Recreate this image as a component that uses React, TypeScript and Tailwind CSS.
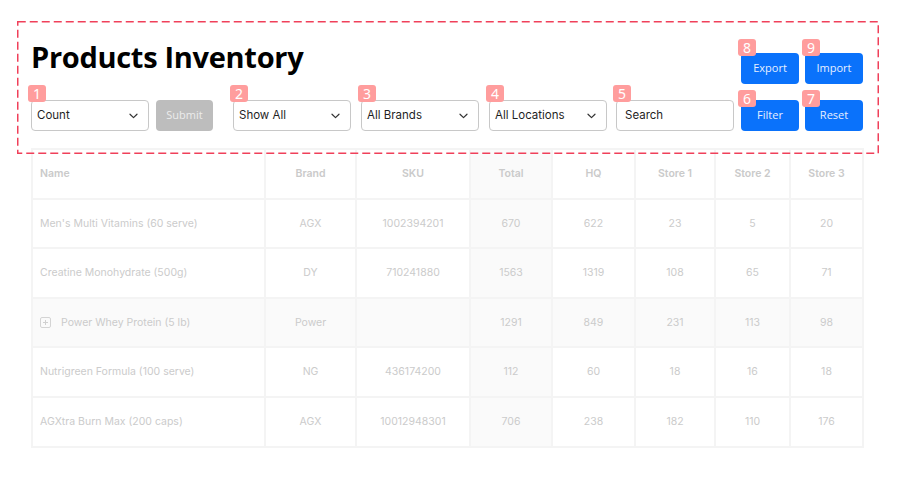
import React from "react";

const Badge = ({ n, top }: { n: number; top: string }) => (
  <div
    className={`absolute ${top} left-[-3px] w-[18px] h-[17px] rounded-[3px] bg-[#ff9d9d] text-white text-[14px] leading-none flex items-center justify-center`}
    style={{ fontFamily: '"Noto Sans", sans-serif' }}
  >
    {n}
  </div>
);

const Chevron = () => (
  <svg width="9" height="6" viewBox="0 0 9 6" fill="none">
    <path d="M1 1.2 L4.5 4.6 L8 1.2" stroke="#333" strokeWidth="1.2" strokeLinecap="round" strokeLinejoin="round" />
  </svg>
);

const SelectBox = ({ label, n, cls }: { label: string; n: number; cls: string }) => (
  <div className={`relative ${cls}`}>
    <div className="w-[118px] h-[31px] border border-[#c8c8c8] rounded-[4px] bg-white flex items-center justify-between pl-[5px] pr-[10px] text-[11.5px] text-[#1f1f1f]">
      <span>{label}</span>
      <Chevron />
    </div>
    <Badge n={n} top="top-[-15px]" />
  </div>
);

const BlueBtn = ({ label, n, top, cls }: { label: string; n: number; top: string; cls: string }) => (
  <div className={`relative ${cls}`}>
    <button
      className="w-[58px] h-[31px] rounded-[4px] bg-[#0a72fb] text-[#e6efff] text-[11px]"
      style={{ fontFamily: '"Open Sans", sans-serif' }}
    >
      {label}
    </button>
    <Badge n={n} top={top} />
  </div>
);

const rows = [
  ["Men's Multi Vitamins (60 serve)", "AGX", "1002394201", "670", "622", "23", "5", "20"],
  ["Creatine Monohydrate (500g)", "DY", "710241880", "1563", "1319", "108", "65", "71"],
  ["Power Whey Protein (5 lb)", "Power", "", "1291", "849", "231", "113", "98"],
  ["Nutrigreen Formula (100 serve)", "NG", "436174200", "112", "60", "18", "16", "18"],
  ["AGXtra Burn Max (200 caps)", "AGX", "10012948301", "706", "238", "182", "110", "176"],
];

const widths = [233, 91, 114, 82, 83, 80, 75, 73];
const heads = ["Name", "Brand", "SKU", "Total", "HQ", "Store 1", "Store 2", "Store 3"];

const PlusSquare = () => (
  <svg width="11" height="11" viewBox="0 0 11 11" fill="none" className="shrink-0">
    <rect x="0.5" y="0.5" width="10" height="10" rx="1.5" stroke="#d4d4d4" />
    <path d="M5.5 3 V8 M3 5.5 H8" stroke="#d0d0d0" />
  </svg>
);

export default function App() {
  return (
    <div className="relative w-full h-[500px] bg-white text-[#1f1f1f]" style={{ fontFamily: 'Inter, "Liberation Sans", sans-serif' }}>
      <div className="pl-[31px] pr-[37px] pt-[36px]">
        <div className="flex justify-between items-start">
          <h1
            className="text-[29px] font-bold leading-[41px] text-black tracking-[-0.3px]"
            style={{ fontFamily: '"Open Sans", sans-serif' }}
          >
            Products Inventory
          </h1>
          <div className="flex mt-[17px]">
            <BlueBtn label="Export" n={8} top="top-[-14px]" cls="" />
            <BlueBtn label="Import" n={9} top="top-[-14px]" cls="ml-[6px]" />
          </div>
        </div>
        <div className="flex items-start mt-[16px]">
          <SelectBox label="Count" n={1} cls="" />
          <button
            className="ml-[7px] w-[57px] h-[31px] rounded-[4px] bg-[#bdbdbd] text-[#ececec] text-[11px]"
            style={{ fontFamily: '"Open Sans", sans-serif' }}
          >
            Submit
          </button>
          <SelectBox label="Show All" n={2} cls="ml-[20px]" />
          <SelectBox label="All Brands" n={3} cls="ml-[10px]" />
          <SelectBox label="All Locations" n={4} cls="ml-[10px]" />
          <div className="relative ml-[9px]">
            <div className="w-[118px] h-[31px] border border-[#c8c8c8] rounded-[4px] bg-white flex items-center pl-[8px] text-[11.5px] text-[#1f1f1f]">
              Search
            </div>
            <Badge n={5} top="top-[-15px]" />
          </div>
          <BlueBtn label="Filter" n={6} top="top-[-10px]" cls="ml-[7px]" />
          <BlueBtn label="Reset" n={7} top="top-[-10px]" cls="ml-[6px]" />
        </div>
        <table className="mt-[17px] border-collapse table-fixed w-[831px] text-[10.5px]">
          <colgroup>
            {widths.map((w, i) => (
              <col key={i} style={{ width: w }} />
            ))}
          </colgroup>
          <thead>
            <tr className="h-[49.6px]">
              {heads.map((h, i) => (
                <th
                  key={h}
                  className={`border-2 border-[#f4f4f4] font-semibold text-[#cacaca] ${i === 0 ? "text-left pl-[7px]" : "text-center"} ${i === 3 ? "bg-[#fafafa]" : ""}`}
                >
                  {h}
                </th>
              ))}
            </tr>
          </thead>
          <tbody>
            {rows.map((r, ri) => (
              <tr key={ri} className={`h-[49.6px] ${ri === 2 ? "bg-[#fafafa]" : ""}`}>
                {r.map((c, i) => (
                  <td
                    key={i}
                    className={`border-2 border-[#f4f4f4] text-[#cbcbcb] ${i === 0 ? "text-left pl-[7px]" : "text-center"} ${i === 3 ? "bg-[#fafafa]" : ""}`}
                  >
                    {i === 0 && ri === 2 ? (
                      <span className="flex items-center gap-[10px]">
                        <PlusSquare />
                        {c}
                      </span>
                    ) : (
                      c
                    )}
                  </td>
                ))}
              </tr>
            ))}
          </tbody>
        </table>
      </div>
      <svg className="absolute left-[17px] top-[21px] pointer-events-none" width="862" height="133" viewBox="0 0 862 133">
        <rect x="0.75" y="0.75" width="860.5" height="131.5" fill="none" stroke="#f0405a" strokeWidth="1.5" strokeDasharray="8 4" />
      </svg>
    </div>
  );
}
